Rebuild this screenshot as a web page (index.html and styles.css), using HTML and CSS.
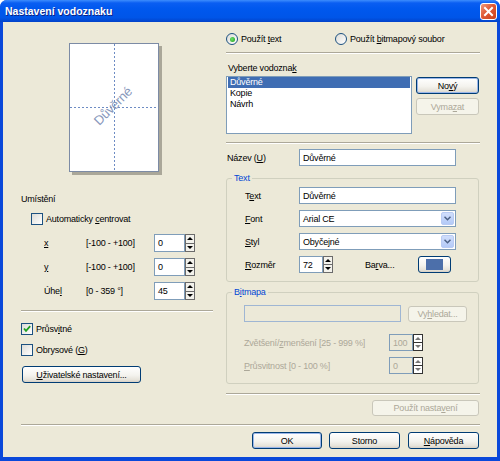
FILE: index.html
```html
<!DOCTYPE html>
<html>
  <head>
    <meta charset="utf-8">
    <title>Nastavení vodoznaku</title>
    <link rel="stylesheet" href="styles.css">
  </head>
  <body>
    <div class="window">
      <div class="titlebar">
        <span class="title">Nastavení vodoznaku</span>
        <span class="close">
          <svg width="15" height="15" viewBox="0 0 15 15"><path d="M4 4 L11 11 M11 4 L4 11" stroke="#fff" stroke-width="2" stroke-linecap="square"/></svg>
        </span>
      </div>

      <div class="client">
        <div class="main">
          <!-- levy sloupec -->
          <div class="left">
            <div class="preview">
              <div class="page">
                <svg width="88" height="127" viewBox="0 0 88 127">
                  <line x1="44.5" y1="0" x2="44.5" y2="127" stroke="#6d8cc4" stroke-dasharray="2 2"/>
                  <line x1="0" y1="63.5" x2="88" y2="63.5" stroke="#6d8cc4" stroke-dasharray="2 2"/>
                  <text x="43" y="62" transform="rotate(-45 43 62)" text-anchor="middle" dominant-baseline="central" font-family="Liberation Sans, sans-serif" font-size="13" fill="#8797bb">Důvěrné</text>
                </svg>
              </div>
            </div>

            <div class="caption">Umístění</div>
            <label class="check-row auto">
              <span class="checkbox"></span>
              <span>Automaticky <u>c</u>entrovat</span>
            </label>

            <div class="pos-row first">
              <span class="lbl"><u>x</u></span>
              <span class="range">[-100 - +100]</span>
              <div class="spin">
                <div class="edit">0</div>
                <div class="updown"><span class="up"></span><span class="down"></span></div>
              </div>
            </div>
            <div class="pos-row">
              <span class="lbl"><u>y</u></span>
              <span class="range">[-100 - +100]</span>
              <div class="spin">
                <div class="edit">0</div>
                <div class="updown"><span class="up"></span><span class="down"></span></div>
              </div>
            </div>
            <div class="pos-row">
              <span class="lbl">Úhe<u>l</u></span>
              <span class="range">[0 - 359 °]</span>
              <div class="spin">
                <div class="edit">45</div>
                <div class="updown"><span class="up"></span><span class="down"></span></div>
              </div>
            </div>

            <div class="sep left-sep"></div>

            <label class="check-row opt first-opt">
              <span class="checkbox checked">
                <svg width="10" height="10" viewBox="0 0 10 10"><path d="M2 4.5 L4 6.8 L8.2 2.2" fill="none" stroke="#21a121" stroke-width="1.8"/></svg>
              </span>
              <span>Průsv<u>i</u>tné</span>
            </label>
            <label class="check-row opt">
              <span class="checkbox"></span>
              <span>Obrysové (<u>G</u>)</span>
            </label>

            <div class="btn custom"><u>U</u>živatelské nastavení...</div>
          </div>

          <!-- pravy sloupec -->
          <div class="right">
            <div class="radio-row">
              <label class="radio-opt first">
                <span class="radio on"></span>
                <span>Použít <u>t</u>ext</span>
              </label>
              <label class="radio-opt">
                <span class="radio"></span>
                <span>Použít <u>b</u>itmapový soubor</span>
              </label>
            </div>

            <div class="sep radio-sep"></div>

            <div class="list-label">Vyberte vodozna<u>k</u></div>
            <div class="list-area">
              <div class="listbox">
                <div class="item selected">Důvěrné</div>
                <div class="item">Kopie</div>
                <div class="item">Návrh</div>
              </div>
              <div class="list-btns">
                <div class="btn default">No<u>v</u>ý</div>
                <div class="btn disabled">Vyma<u>z</u>at</div>
              </div>
            </div>

            <div class="sep list-sep"></div>

            <div class="field-row name-row">
              <span class="flbl">Název (<u>U</u>)</span>
              <div class="edit wide">Důvěrné</div>
            </div>

            <div class="group text-group">
              <span class="legend">Text</span>
              <div class="field-row">
                <span class="glbl">T<u>e</u>xt</span>
                <div class="edit wide">Důvěrné</div>
              </div>
              <div class="field-row gap">
                <span class="glbl"><u>F</u>ont</span>
                <div class="combo">
                  <span class="combo-text">Arial CE</span>
                  <span class="drop"><svg width="7" height="5" viewBox="0 0 7 5"><path d="M0.5 0.8 L3.5 3.8 L6.5 0.8" fill="none" stroke="#4d6185" stroke-width="1.5"/></svg></span>
                </div>
              </div>
              <div class="field-row gap">
                <span class="glbl"><u>S</u>tyl</span>
                <div class="combo">
                  <span class="combo-text">Obyčejné</span>
                  <span class="drop"><svg width="7" height="5" viewBox="0 0 7 5"><path d="M0.5 0.8 L3.5 3.8 L6.5 0.8" fill="none" stroke="#4d6185" stroke-width="1.5"/></svg></span>
                </div>
              </div>
              <div class="field-row gap">
                <span class="glbl"><u>R</u>ozměr</span>
                <div class="spin small">
                  <div class="edit">72</div>
                  <div class="updown"><span class="up"></span><span class="down"></span></div>
                </div>
                <span class="barva">Ba<u>r</u>va...</span>
                <div class="btn color-btn"><span class="swatch"></span></div>
              </div>
            </div>

            <div class="group bitmap-group">
              <span class="legend">B<u>i</u>tmapa</span>
              <div class="field-row">
                <div class="edit wide disabled-edit"></div>
                <div class="btn disabled browse">Vy<u>h</u>ledat...</div>
              </div>
              <div class="field-row zoom-row">
                <span class="dlbl">Zvětšení/<u>z</u>menšení [25 - 999 %]</span>
                <div class="spin small">
                  <div class="edit off">100</div>
                  <div class="updown off"><span class="up"></span><span class="down"></span></div>
                </div>
              </div>
              <div class="field-row gap">
                <span class="dlbl"><u>P</u>růsvitnost [0 - 100 %]</span>
                <div class="spin small">
                  <div class="edit off">0</div>
                  <div class="updown off"><span class="up"></span><span class="down"></span></div>
                </div>
              </div>
            </div>

            <div class="sep group-sep"></div>

            <div class="apply-row">
              <div class="btn disabled apply">Použít nasta<u>v</u>ení</div>
            </div>
          </div>
        </div>

        <div class="sep bottom-sep"></div>

        <div class="actions">
          <div class="btn default ok">OK</div>
          <div class="btn storno">Storno</div>
          <div class="btn help"><u>N</u>ápověda</div>
        </div>
      </div>
    </div>
  </body>
</html>
```

FILE: styles.css
```css
*{
  margin: 0;
  padding: 0;
  box-sizing: border-box;
}
body{
  background: #fff;
  font-family: "Liberation Sans", Arial, sans-serif;
  font-size: 9px;
  letter-spacing: -0.2px;
  color: #000;
}
u{
  text-underline-offset: 1px;
}

/* okno */
.window{
  width: 500px;
  height: 461px;
  background: #0a48da;
  border-radius: 7px 7px 0 0;
  display: flex;
  flex-direction: column;
  overflow: hidden;
}
.titlebar{
  height: 22px;
  display: flex;
  align-items: center;
  justify-content: space-between;
  padding: 0 3px 0 5px;
  background: linear-gradient(#3d8dfd 0, #0a5ef2 3px, #0058ee 40%, #0055e8 80%, #0242c9 100%);
}
.title{
  color: #fff;
  font-weight: bold;
  font-size: 10.5px;
  letter-spacing: 0;
  text-shadow: 1px 1px #0c2486;
}
.close{
  width: 17px;
  height: 17px;
  margin-top: 1px;
  border: 1px solid #fff;
  border-radius: 3px;
  background: linear-gradient(135deg, #f09a7c, #e05a36 45%, #c8421c);
  display: flex;
  align-items: center;
  justify-content: center;
}
.client{
  flex: 1;
  margin: 0 3px 4px;
  background: #ece9d8;
  padding: 0 17px 0 18px;
}
.main{
  display: flex;
  gap: 13px;
  align-items: flex-start;
  height: 394px;
}
.left{
  width: 192px;
}
.right{
  width: 254px;
}

/* nahled stranky */
.preview{
  padding: 21px 0 0 48px;
}
.page{
  width: 90px;
  height: 129px;
  border: 1px solid #7c8ba5;
  background: #fff;
  box-shadow: 3px 3px 0 #aaa799;
}
.page svg{
  display: block;
}

.caption{
  margin-top: 20px;
  height: 14px;
  line-height: 14px;
}

/* zaskrtavaci pole */
.check-row{
  display: flex;
  align-items: center;
  gap: 3px;
  height: 14px;
}
.check-row.auto{
  margin-top: 6px;
  padding-left: 10px;
}
.check-row.opt{
  height: 13px;
  margin-top: 8px;
}
.check-row.first-opt{
  margin-top: 10px;
}
.checkbox{
  width: 12px;
  height: 12px;
  border: 1px solid #1c5180;
  background: linear-gradient(135deg, #dcdcd7, #fff);
  display: flex;
  align-items: center;
  justify-content: center;
}

.pos-row{
  display: flex;
  align-items: center;
  height: 18px;
  margin-top: 6px;
  padding-left: 23px;
}
.pos-row.first{
  margin-top: 8px;
}
.lbl{
  width: 42px;
}
.range{
  width: 68px;
}

/* editacni pole */
.edit{
  height: 100%;
  border: 1px solid #7f9db9;
  background: #fff;
  padding-left: 3px;
  display: flex;
  align-items: center;
}
.edit.wide{
  width: 157px;
  height: 17px;
}
.edit.off{
  background: #ece9d8;
  color: #aca899;
}
.disabled-edit{
  background: #ece9d8;
  border-color: #9fb6d3;
}

.spin{
  display: flex;
  height: 18px;
}
.spin .edit{
  width: 31px;
}
.spin.small{
  height: 17px;
}
.spin.small .edit{
  width: 24px;
}
.updown{
  width: 10px;
  display: flex;
  flex-direction: column;
}
.updown span{
  flex: 1;
  border: 1px solid #6b6b6b;
  background: #f3f2ec;
  display: flex;
  align-items: center;
  justify-content: center;
}
.updown .down{
  border-top: none;
}
.updown .up::before,
.updown .down::before{
  content: "";
  border-left: 3px solid transparent;
  border-right: 3px solid transparent;
}
.updown .up::before{
  border-bottom: 3px solid #000;
}
.updown .down::before{
  border-top: 3px solid #000;
}
.updown.off span{
  border-color: #333;
  background: #fff;
}
.updown.off .up::before{
  border-bottom-color: #777;
}
.updown.off .down::before{
  border-top-color: #777;
}

.sep{
  height: 2px;
  border-top: 1px solid #aca899;
  border-bottom: 1px solid #fff;
}
.left-sep{
  margin-top: 10px;
}

/* tlacitka */
.btn{
  height: 17px;
  border: 1px solid #003c74;
  border-radius: 3px;
  background: linear-gradient(#fff, #f4f3ee 55%, #e6e3da 85%, #d6d0c5);
  display: flex;
  align-items: center;
  justify-content: center;
}
.btn.default{
  box-shadow: inset 0 0 0 1px #9ab6e9;
}
.btn.disabled{
  border-color: #c9c7ba;
  background: #f5f4ea;
  color: #aca899;
}
.btn.custom{
  width: 119px;
  margin: 10px 0 0 1px;
}

/* prepinace */
.radio-row{
  display: flex;
  align-items: center;
  height: 12px;
  margin-top: 11px;
}
.radio-opt{
  display: flex;
  align-items: center;
  gap: 3px;
}
.radio-opt.first{
  width: 109px;
}
.radio{
  width: 12px;
  height: 12px;
  border: 1px solid #1c5180;
  border-radius: 50%;
  background: linear-gradient(135deg, #dcdcd7, #fff);
  display: flex;
  align-items: center;
  justify-content: center;
}
.radio.on::before{
  content: "";
  width: 5px;
  height: 5px;
  border-radius: 50%;
  background: radial-gradient(circle at 40% 40%, #6fe06c, #1a9d19);
}
.radio-sep{
  margin-top: 7px;
}

/* seznam */
.list-label{
  margin-top: 8px;
  height: 12px;
  line-height: 12px;
  padding-left: 2px;
}
.list-area{
  display: flex;
  gap: 4px;
  margin-top: 2px;
}
.listbox{
  width: 186px;
  height: 58px;
  border: 1px solid #7f9db9;
  background: #fff;
  padding: 0 1px;
}
.item{
  height: 11px;
  line-height: 11px;
  padding-left: 2px;
}
.item.selected{
  background: #3f6db3;
  color: #fff;
}
.list-btns{
  width: 63px;
  display: flex;
  flex-direction: column;
  gap: 4px;
  padding-top: 1px;
}
.list-sep{
  margin-top: 8px;
}

/* radky formulare */
.field-row{
  display: flex;
  align-items: center;
  height: 17px;
}
.field-row.gap{
  margin-top: 6px;
}
.name-row{
  margin-top: 5px;
  padding-left: 1px;
}
.flbl{
  width: 72px;
}
.glbl{
  width: 54px;
}
.dlbl{
  width: 145px;
  color: #aca899;
}

.group{
  position: relative;
  width: 253px;
  border: 1px solid #d0d0bf;
  border-radius: 3px;
}
.legend{
  position: absolute;
  top: -7px;
  left: 5px;
  padding: 0 2px;
  line-height: 12px;
  background: #ece9d8;
  color: #0046d5;
}
.text-group{
  margin-top: 12px;
  padding: 8px 0 8px 18px;
}
.bitmap-group{
  margin-top: 10px;
  padding: 12px 0 9px 17px;
}

.combo{
  width: 157px;
  height: 17px;
  border: 1px solid #7f9db9;
  background: #fff;
  display: flex;
  align-items: center;
}
.combo-text{
  flex: 1;
  padding-left: 3px;
}
.drop{
  width: 13px;
  height: 13px;
  margin-right: 1px;
  border-radius: 2px;
  background: linear-gradient(#d0defc, #b4caf7);
  border: 1px solid #b9cbf3;
  display: flex;
  align-items: center;
  justify-content: center;
}

.barva{
  width: 53px;
  margin-left: 32px;
}
.btn.color-btn{
  width: 33px;
}
.swatch{
  width: 17px;
  height: 11px;
  background: #4c6faa;
}

.btn.browse{
  width: 59px;
  height: 16px;
  margin-left: 7px;
}
.zoom-row{
  margin-top: 12px;
}
.group-sep{
  margin-top: 9px;
}
.apply-row{
  display: flex;
  justify-content: flex-end;
  margin-top: 5px;
  padding-right: 1px;
}
.btn.apply{
  width: 107px;
  height: 16px;
}

/* spodni tlacitka */
.bottom-sep{
  margin-top: 8px;
}
.actions{
  display: flex;
  justify-content: flex-end;
  margin-top: 6px;
  padding-right: 1px;
}
.ok{
  width: 70px;
}
.storno{
  width: 71px;
  margin-left: 7px;
}
.help{
  width: 71px;
  margin-left: 8px;
}
```
